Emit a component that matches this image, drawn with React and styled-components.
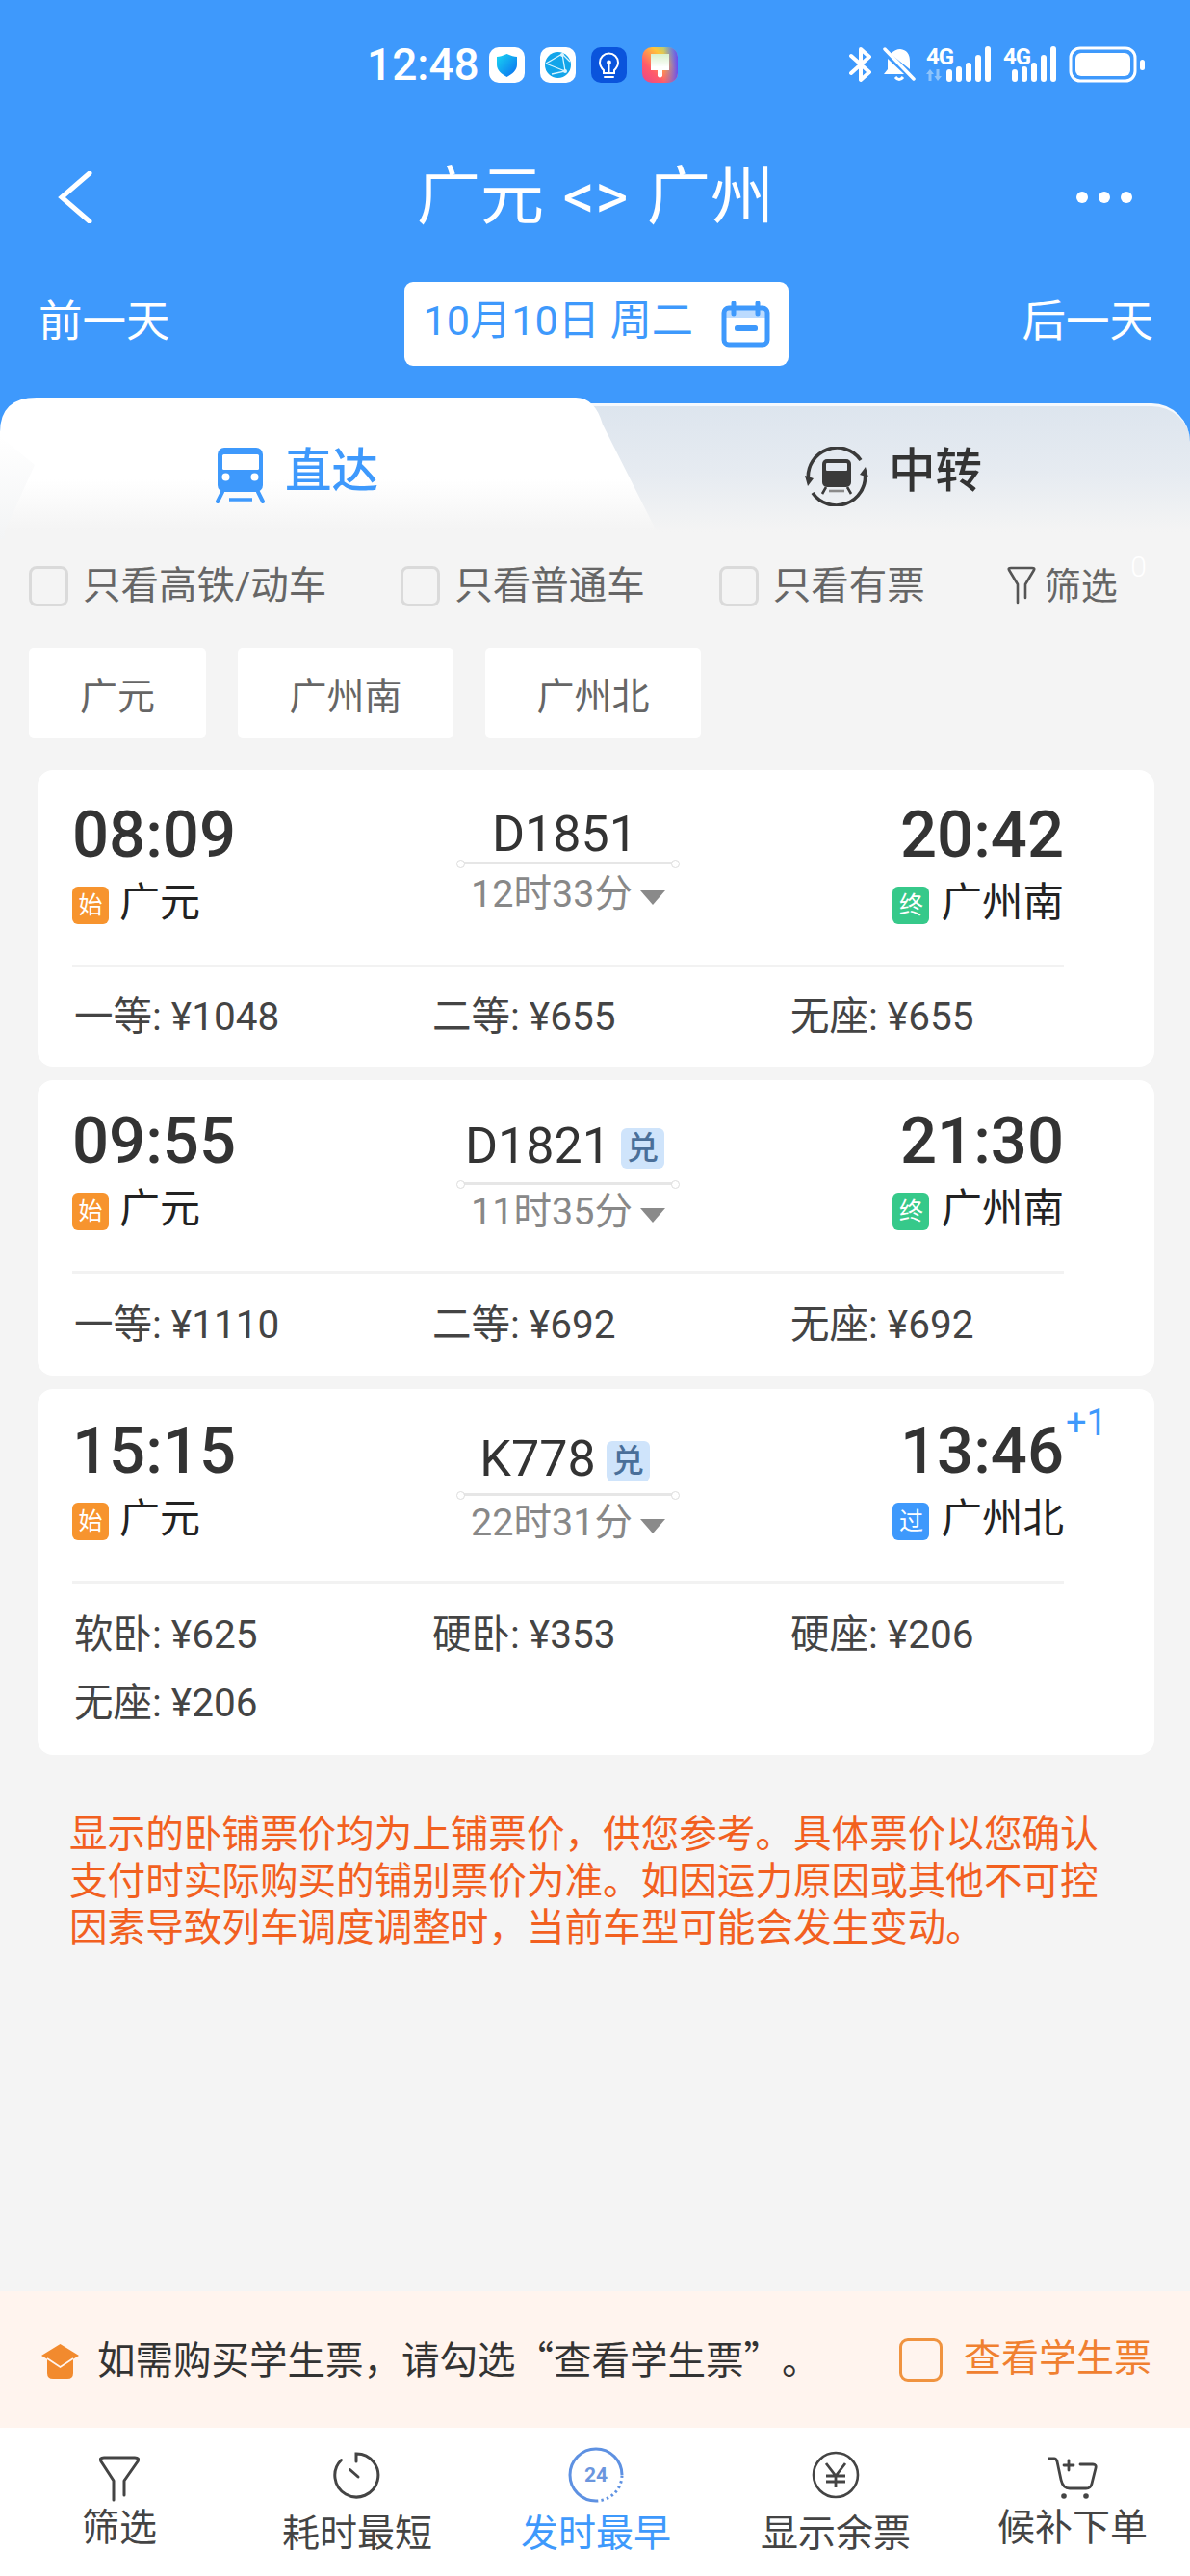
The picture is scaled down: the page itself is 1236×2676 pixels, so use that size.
import React from 'react';
import styled, { createGlobalStyle } from 'styled-components';

const BLUE = '#3e99fc';

const Global = createGlobalStyle`
  html, body { margin: 0; padding: 0; background: #f4f4f4; }
  * { box-sizing: border-box; }
  body { font-family: Roboto, "Noto Sans CJK SC", sans-serif; text-spacing-trim: space-all; }
`;

const Page = styled.div`
  width: 1236px;
  height: 2676px;
  display: flex;
  flex-direction: column;
  background: #f4f4f4;
  overflow: hidden;
`;

const Header = styled.header`
  background: ${BLUE};
  padding: 48px 0 33px;
  color: #fff;
`;

const StatusBar = styled.div`
  height: 38px;
  padding: 0 46px 0 381px;
  display: flex;
  align-items: center;
  justify-content: space-between;
`;

const StatusLeft = styled.div`
  display: flex;
  align-items: center;
`;

const Clock = styled.span`
  font-size: 46px;
  line-height: 38px;
  width: 127px;
  font-weight: 500;
`;

const AppIcons = styled.div`
  display: flex;
  gap: 16px;
  svg { display: block; }
`;

const TitleRow = styled.div`
  margin-top: 87px;
  height: 64px;
  padding: 0 59px 0 60px;
  display: grid;
  grid-template-columns: 60px 1fr 60px;
  align-items: center;
`;

const Title = styled.h1`
  margin: 0;
  text-align: center;
  font-size: 66px;
  line-height: 64px;
  font-weight: 400;
  word-spacing: 3px;
`;

const DateRow = styled.div`
  margin-top: 56px;
  height: 87px;
  padding: 0 38px 0 40px;
  display: flex;
  align-items: center;
  justify-content: space-between;
`;

const DayLink = styled.span`
  font-size: 45.5px;
  line-height: 60px;
  font-weight: 400;
  padding-bottom: 3px;
`;

const DatePill = styled.div`
  width: 399px;
  height: 87px;
  background: #fff;
  border-radius: 9px;
  color: ${BLUE};
  display: flex;
  align-items: center;
  justify-content: space-between;
  padding: 0 19px 0 20px;
`;

const DateText = styled.span`
  font-size: 43.2px;
  line-height: 50px;
  padding-bottom: 6px;
  white-space: nowrap;
`;

const TabBar = styled.div`
  position: relative;
  height: 147px;
  display: grid;
  grid-template-columns: 680px 1fr;
  background: linear-gradient(to bottom, ${BLUE} 60px, #f4f4f4 60px);
  &::before {
    content: '';
    position: absolute;
    inset: 6px 0 0 0;
    border-radius: 40px 40px 0 0;
    border-top: 3px solid #f6f9fd;
    background: linear-gradient(to bottom, #dde5ee 0%, #e6ebf1 50%, #f4f4f4 95%);
  }
  &::after {
    content: '';
    position: absolute;
    left: 0;
    top: 0;
    width: 690px;
    height: 147px;
    clip-path: path('M0 147 V36 Q0 0 38 0 H598 Q618 0 626 28 L686 147 Z');
    background: linear-gradient(to bottom, #fff 0%, #fff 58%, #f4f4f4 94%);
  }
`;

const TabFade = styled.div`
  position: absolute;
  z-index: 1;
  left: 0;
  top: 40px;
  width: 36px;
  height: 107px;
  clip-path: polygon(0 0, 100% 28%, 14% 92%, 14% 100%, 0 100%);
  background: linear-gradient(to bottom, #ffffff 0%, #f3f4f5 100%);
`;

const Tab = styled.div`
  position: relative;
  z-index: 2;
  display: flex;
  align-items: center;
  gap: ${p => p.$gap}px;
  padding-left: ${p => p.$left}px;
  padding-top: 17px;
  color: ${p => p.$color};
  svg { display: block; flex: none; }
`;

const TabLabel = styled.span`
  font-size: 48.5px;
  line-height: 56px;
  font-weight: 500;
  padding-bottom: 10px;
`;

const FilterRow = styled.div`
  position: relative;
  margin-top: 28px;
  padding-left: 30px;
  height: 42px;
  display: flex;
  align-items: center;
  gap: 77px;
`;

const CheckOption = styled.label`
  display: flex;
  align-items: center;
  gap: 15px;
  font-size: 39.5px;
  line-height: 42px;
  color: #666;
  white-space: nowrap;
`;

const CheckBox = styled.span`
  display: block;
  flex: none;
  width: 41px;
  height: 42px;
  border-radius: 8px;
  border: 3px solid #dadada;
  background: #f4f4f4;
`;

const FilterLink = styled.span`
  position: relative;
  display: flex;
  align-items: center;
  gap: 9px;
  font-size: 38px;
  line-height: 42px;
  color: #666;
  margin-left: 8px;
`;

const ZeroBadge = styled.span`
  position: absolute;
  right: -30px;
  top: -14px;
  font-size: 30px;
  line-height: 30px;
  font-weight: 300;
  color: #fff;
`;

const ChipRow = styled.div`
  margin-top: 43px;
  padding-left: 30px;
  display: flex;
  gap: 33px;
`;

const Chip = styled.div`
  height: 94px;
  width: ${p => p.$w}px;
  background: #fff;
  border-radius: 5px;
  font-size: 39px;
  color: #666;
  display: flex;
  align-items: center;
  justify-content: center;
`;

const CardList = styled.div`
  margin-top: 33px;
  padding: 0 37px 0 39px;
  display: flex;
  flex-direction: column;
  gap: 14px;
`;

const Card = styled.article`
  background: #fff;
  border-radius: 16px;
  height: ${p => p.$h}px;
  padding: ${p => p.$top}px 94px 0 36px;
`;

const TopRow = styled.div`
  height: 168px;
  display: grid;
  grid-template-columns: 1fr 240px 1fr;
`;

const Stop = styled.div`
  display: flex;
  flex-direction: column;
  align-items: ${p => (p.$end ? 'flex-end' : 'flex-start')};
`;

const Time = styled.div`
  position: relative;
  font-size: 67px;
  line-height: 66px;
  font-weight: 500;
  color: #333;
`;

const NextDay = styled.span`
  position: absolute;
  left: 100%;
  top: -18px;
  margin-left: 2px;
  font-size: 38px;
  line-height: 44px;
  font-weight: 400;
  color: ${BLUE};
`;

const StationRow = styled.div`
  margin-top: 12px;
  display: flex;
  align-items: center;
  gap: ${p => (p.$wide ? 12 : 11)}px;
  font-size: ${p => (p.$wide ? 42.5 : 42)}px;
  line-height: 52px;
  color: #222;
`;

const EndTag = styled.span`
  display: flex;
  align-items: center;
  justify-content: center;
  width: 38px;
  height: 39px;
  margin-top: 5px;
  border-radius: 6px;
  font-size: 25px;
  color: #fff;
  background: ${p => p.$bg};
`;

const Middle = styled.div`
  display: flex;
  flex-direction: column;
  align-items: center;
`;

const TrainRow = styled.div`
  margin-top: ${p => p.$top}px;
  margin-right: 7px;
  height: 52px;
  display: flex;
  align-items: center;
  gap: 11px;
  font-size: 52px;
  line-height: 52px;
  color: #333;
`;

const CashTag = styled.span`
  display: flex;
  align-items: center;
  justify-content: center;
  width: 45px;
  height: 42px;
  margin-top: 4px;
  border-radius: 6px;
  background: #cfe4fb;
  color: #4a6f99;
  font-size: 33px;
  font-weight: 500;
`;

const RouteLine = styled.div`
  position: relative;
  width: 230px;
  height: 3px;
  margin-top: ${p => p.$top}px;
  background: #e6e6e6;
  &::before, &::after {
    content: '';
    position: absolute;
    top: -2px;
    width: 7px;
    height: 7px;
    border-radius: 50%;
    border: 1.5px solid #ddd;
    background: #fff;
  }
  &::before { left: -1px; }
  &::after { right: -1px; }
`;

const Duration = styled.div`
  margin-top: ${p => p.$top}px;
  display: flex;
  align-items: center;
  gap: 8px;
  font-size: 39.5px;
  line-height: 52px;
  color: #888;
`;

const Caret = styled.span`
  width: 0;
  height: 0;
  margin-top: 7px;
  border-left: 13px solid transparent;
  border-right: 13px solid transparent;
  border-top: 15px solid #8a8a8a;
`;

const Divider = styled.div`
  height: 3px;
  background: #f2f2f2;
`;

const Prices = styled.div`
  margin-top: ${p => p.$top}px;
  padding-left: 2px;
  display: grid;
  grid-template-columns: repeat(3, 372px);
  grid-auto-rows: 71px;
`;

const Price = styled.div`
  font-size: 40.5px;
  line-height: 71px;
  color: #444;
  white-space: nowrap;
`;

const Notice = styled.p`
  margin: 55px 0 0;
  padding: 0 0 0 72px;
  width: 1160px;
  font-family: "Noto Sans CJK SC", sans-serif;
  font-size: 39.6px;
  line-height: 48.5px;
  color: #f2601f;
`;

const Spacer = styled.div`
  flex: 1;
`;

const StudentBar = styled.div`
  height: 142px;
  padding: 0 40px 0 43px;
  background: #fff4ee;
  display: flex;
  align-items: center;
  justify-content: space-between;
`;

const StudentHint = styled.div`
  display: flex;
  align-items: center;
  gap: 19px;
  font-family: "Noto Sans CJK SC", sans-serif;
  font-size: 39.5px;
  line-height: 50px;
  color: #333;
  white-space: nowrap;
  svg { display: block; flex: none; margin-top: 3px; }
`;

const HintText = styled.span`
  padding-bottom: 4px;
`;

const StudentCheck = styled.div`
  display: flex;
  align-items: center;
  gap: 22px;
  font-size: 39px;
  line-height: 50px;
  color: #f08030;
`;

const OrangeLabel = styled.span`
  padding-bottom: 3px;
`;

const OrangeBox = styled.span`
  display: block;
  width: 45px;
  height: 45px;
  border: 3px solid #f0933f;
  border-radius: 9px;
`;

const BottomNav = styled.nav`
  height: 154px;
  background: #fff;
  display: grid;
  grid-template-columns: 248px 246px 250px 248px 244px;
`;

const NavItem = styled.div`
  display: flex;
  flex-direction: column;
  align-items: center;
  color: ${p => (p.$active ? BLUE : '#444')};
  svg { display: block; }
`;

const NavIconSlot = styled.div`
  height: 58px;
  margin-top: ${p => p.$top}px;
  display: flex;
  align-items: center;
`;

const NavLabel = styled.span`
  margin-top: ${p => p.$gap}px;
  font-size: 39px;
  line-height: 50px;
  white-space: nowrap;
`;

const BackIcon = () => (
  <svg width="36" height="54" viewBox="0 0 36 54" fill="none">
    <path d="M33 2 L4 27 L33 52" stroke="#fff" strokeWidth="5" strokeLinecap="round" strokeLinejoin="miter" />
  </svg>
);

const MoreIcon = () => (
  <svg width="60" height="14" viewBox="0 0 60 14" fill="#fff">
    <circle cx="7" cy="7" r="6" />
    <circle cx="30" cy="7" r="6" />
    <circle cx="53" cy="7" r="6" />
  </svg>
);

const CalendarIcon = () => (
  <svg width="51" height="48" viewBox="0 0 51 48" fill="none">
    <rect x="3" y="7" width="45" height="38" rx="5" stroke={BLUE} strokeWidth="5" />
    <rect x="3" y="7" width="45" height="10" fill={BLUE} opacity=".35" />
    <path d="M13 2 V13 M38 2 V13" stroke={BLUE} strokeWidth="5" strokeLinecap="round" />
    <rect x="14" y="25" width="24" height="6" rx="2.5" fill={BLUE} />
  </svg>
);

const ShieldApp = () => (
  <svg width="37" height="37" viewBox="0 0 37 37">
    <defs>
      <linearGradient id="sh" x1="0" y1="0" x2="1" y2="1">
        <stop offset="0" stopColor="#19d6f2" />
        <stop offset="1" stopColor="#0b6cf0" />
      </linearGradient>
    </defs>
    <rect width="37" height="37" rx="10" fill="#fff" />
    <path d="M18.5 7 C23 9 26 10 29 10 V18 C29 24 24 28 18.5 31 C13 28 8 24 8 18 V10 C11 10 14 9 18.5 7 Z" fill="url(#sh)" />
  </svg>
);

const GlobeApp = () => (
  <svg width="37" height="37" viewBox="0 0 37 37">
    <rect width="37" height="37" rx="10" fill="#fff" />
    <circle cx="18.5" cy="18.5" r="13.5" fill="#12a5ea" />
    <path d="M6 17 L23 7 L26 25 L12 28 M6 17 L26 25 M23 7 L31 15" stroke="#d8f4ff" strokeWidth="1.3" fill="none" />
    <circle cx="23" cy="8" r="2" fill="#d8f4ff" />
    <circle cx="26" cy="25" r="2" fill="#d8f4ff" />
  </svg>
);

const BulbApp = () => (
  <svg width="37" height="37" viewBox="0 0 37 37">
    <rect width="37" height="37" rx="10" fill="#0a54dc" />
    <path d="M13 24 C10 21 9 19 9 16 A9.5 9.5 0 0 1 28 16 C28 19 27 21 24 24 V27 H13 Z M14 31 H23" fill="none" stroke="#fff" strokeWidth="2" strokeLinecap="round" />
    <circle cx="18.5" cy="16" r="2.4" fill="#fff" />
    <path d="M18.5 17 V26" stroke="#fff" strokeWidth="2" />
  </svg>
);

const BrushApp = () => (
  <svg width="37" height="37" viewBox="0 0 37 37">
    <defs>
      <linearGradient id="br" x1="1" y1="0" x2="0" y2="1">
        <stop offset="0" stopColor="#58d6c8" />
        <stop offset=".35" stopColor="#ffc43a" />
        <stop offset=".7" stopColor="#ff5a6a" />
        <stop offset="1" stopColor="#e8468c" />
      </linearGradient>
      <linearGradient id="bh" x1="0" y1="0" x2="0" y2="1">
        <stop offset="0" stopColor="#d9f0cc" />
        <stop offset="1" stopColor="#fff" />
      </linearGradient>
      <linearGradient id="bv" x1="0" y1="0" x2="1" y2="0">
        <stop offset=".6" stopColor="#6a4df0" stopOpacity="0" />
        <stop offset="1" stopColor="#6a4df0" />
      </linearGradient>
    </defs>
    <rect width="37" height="37" rx="10" fill="url(#br)" />
    <rect width="37" height="37" rx="10" fill="url(#bv)" />
    <rect x="9" y="7" width="19" height="14" fill="url(#bh)" />
    <path d="M9 20 H28 V24 H21 V30 Q18.5 33 16 30 V24 H9 Z" fill="#fff" />
  </svg>
);

const SignalBars = () => (
  <svg width="47" height="37" viewBox="0 0 47 37" fill="#fff">
    <rect x="0" y="24" width="6" height="13" rx="3" />
    <rect x="10" y="21" width="6" height="16" rx="3" />
    <rect x="20" y="17" width="6" height="20" rx="3" />
    <rect x="30" y="9" width="6" height="28" rx="3" />
    <rect x="40" y="0" width="6" height="37" rx="3" />
  </svg>
);

const StatusRight = styled.div`
  display: flex;
  align-items: flex-start;
  height: 38px;
  svg { display: block; flex: none; }
`;

const NetLabel = styled.span`
  display: block;
  flex: none;
  width: 30px;
  font-size: 24px;
  line-height: 20px;
  font-weight: 700;
  margin-top: 1px;
  letter-spacing: -1px;
  color: #fff;
`;

const NetBlock = styled.div`
  position: relative;
  display: flex;
  width: ${p => p.$w}px;
  margin-left: ${p => p.$left}px;
  & > svg { position: absolute; right: 0; top: 0; }
`;

const BluetoothMuted = () => (
  <svg width="24" height="38" viewBox="0 0 24 38" fill="none">
    <path d="M2 10 L21 27 L12 35 V3 L21 11 L2 28" stroke="#fff" strokeWidth="4" strokeLinejoin="round" strokeLinecap="round" />
  </svg>
);

const BellMuted = () => (
  <svg width="34" height="38" viewBox="0 0 34 38" fill="none" style={{ marginLeft: 11 }}>
    <path d="M8 8 Q13 3 18 3 Q28 4 28 16 V24 L8 8 Z M5 13 V24 L1 29 H22 Z" fill="#fff" />
    <path d="M13 32 Q17 37 21 32" stroke="#fff" strokeWidth="3" />
    <path d="M2 3 L32 34" stroke="#fff" strokeWidth="3.5" strokeLinecap="round" />
  </svg>
);

const DataArrows = () => (
  <svg width="16" height="12" viewBox="0 0 16 12" style={{ position: 'absolute', left: 0, top: 24, right: 'auto' }} fill="#8ec4fb">
    <path d="M4 0 L8 5 H5.5 V12 H2.5 V5 H0 Z M12 12 L8.5 7 H10.5 V0 H13.5 V7 H16 Z" />
  </svg>
);

const Battery = () => (
  <svg width="80" height="38" viewBox="0 0 80 38" style={{ marginLeft: 12 }}>
    <rect x="2" y="2" width="67" height="34" rx="10" fill="none" stroke="#fff" strokeWidth="3" />
    <rect x="7" y="7" width="57" height="24" rx="6" fill="#fff" />
    <rect x="74" y="14" width="5" height="11" rx="2.5" fill="#fff" />
  </svg>
);

const TrainIcon = () => (
  <svg width="51" height="60" viewBox="0 0 51 60" fill="none">
    <rect x="2" y="0" width="47" height="46" rx="7" fill={BLUE} />
    <rect x="7" y="7" width="38" height="16" rx="1.5" fill="#fff" />
    <circle cx="10.5" cy="30.5" r="4" fill="#fff" />
    <circle cx="40.5" cy="30.5" r="4" fill="#fff" />
    <path d="M7 46 L2 56 M44 46 L49 56" stroke={BLUE} strokeWidth="4" strokeLinecap="round" />
    <path d="M14 54 H38" stroke={BLUE} strokeWidth="3.5" />
  </svg>
);

const TransferIcon = () => (
  <svg width="66" height="62" viewBox="0 0 66 62" fill="none">
    <path d="M3.5 34 A30 30 0 0 1 58 14" stroke="#3a3a3a" strokeWidth="3.6" />
    <path d="M62.5 28 A30 30 0 0 1 8 48" stroke="#3a3a3a" strokeWidth="3.6" />
    <path d="M0 30 L9 33 L3 41 Z M66 32 L57 29 L63 21 Z" fill="#3a3a3a" />
    <rect x="18" y="13" width="30" height="29" rx="5" fill="#3a3a3a" />
    <rect x="22" y="17" width="22" height="8" rx="1" fill="#e4e9f0" />
    <path d="M22 42 L18 49 M44 42 L48 49" stroke="#3a3a3a" strokeWidth="2.6" />
    <path d="M25 46 H41" stroke="#8a8a8a" strokeWidth="2.6" />
  </svg>
);

const SmallFunnel = () => (
  <svg width="30" height="42" viewBox="0 0 30 42" fill="none">
    <path d="M11 38 V19 L2 4 Q1 2 4 2 H26 Q29 2 28 4 L19 19 V33" stroke="#555" strokeWidth="2.6" strokeLinejoin="round" strokeLinecap="round" />
  </svg>
);

const NavFunnel = () => (
  <svg width="42" height="48" viewBox="0 0 42 48" fill="none">
    <path d="M15 46 V26 L2 6 Q0 2 5 2 H37 Q42 2 40 6 L26 26 V41" stroke="#444" strokeWidth="3" strokeLinecap="round" strokeLinejoin="round" />
  </svg>
);

const NavClock = () => (
  <svg width="50" height="50" viewBox="0 0 50 50" fill="none">
    <path d="M24 11 V3 A22.5 22.5 0 1 1 8.5 9.5" stroke="#444" strokeWidth="3" strokeLinecap="round" />
    <path d="M17.5 19.5 L26 27" stroke="#444" strokeWidth="3" strokeLinecap="round" />
  </svg>
);

const NavEarliest = () => (
  <svg width="58" height="58" viewBox="0 0 58 58" fill="none">
    <path d="M56 29 A27 27 0 1 0 29 56" stroke="#5e91e2" strokeWidth="3" />
    <path d="M29 56 A27 27 0 0 0 56 29" stroke="#5e91e2" strokeWidth="3" strokeDasharray="2.4 3.2" />
    <text x="29" y="36" textAnchor="middle" fontSize="21" fontWeight="700" fill="#6b96de" fontFamily="Roboto, sans-serif">24</text>
  </svg>
);

const NavYen = () => (
  <svg width="50" height="50" viewBox="0 0 50 50" fill="none" stroke="#444">
    <circle cx="25" cy="25" r="23" strokeWidth="2.6" />
    <path d="M15 13 L25 26 L35 13 M25 26 V38 M15 26 H35 M15 32 H35" strokeWidth="2.8" />
  </svg>
);

const NavCart = () => (
  <svg width="52" height="46" viewBox="0 0 52 46" fill="none" stroke="#444" strokeWidth="2.8" strokeLinecap="round">
    <path d="M1 2 H7 Q9 2 10 5 L14 24 Q16 33 23 33 H40 Q45 33 46 28 L50 12 Q51 8 47 8 H34" />
    <path d="M22 4 V14 M17 9 H27" />
    <circle cx="17" cy="41" r="2.8" fill="#444" stroke="none" />
    <circle cx="40" cy="41" r="2.8" fill="#444" stroke="none" />
  </svg>
);

const CapIcon = () => (
  <svg width="39" height="36" viewBox="0 0 39 36">
    <path d="M19.5 0 L39 12 L19.5 24 L0 12 Z" fill="#f28a2e" />
    <path d="M6 12 H33 V30 Q33 36 27 36 H12 Q6 36 6 30 Z" fill="#f28a2e" />
    <path d="M6 15 L19.5 24 L33 15" stroke="#fff4ee" strokeWidth="1.8" fill="none" />
  </svg>
);

const TAGS = {
  始: '#f7942e',
  终: '#36c98a',
  过: '#3e99fc',
};

const trains = [
  {
    id: 'D1851', from: '08:09', to: '20:42', station: '广州南', tag: '终', duration: '12时33分',
    h: 308, top: 34, trainTop: 7, lineTop: 2, durTop: 5, priceTop: 16,
    prices: ['一等: ¥1048', '二等: ¥655', '无座: ¥655'],
  },
  {
    id: 'D1821', from: '09:55', to: '21:30', station: '广州南', tag: '终', duration: '11时35分', cash: true,
    h: 307, top: 30, trainTop: 13, lineTop: 11, durTop: 2, priceTop: 18,
    prices: ['一等: ¥1110', '二等: ¥692', '无座: ¥692'],
  },
  {
    id: 'K778', from: '15:15', to: '13:46', station: '广州北', tag: '过', duration: '22时31分', cash: true, next: '+1',
    h: 380, top: 31, trainTop: 16, lineTop: 9, durTop: 2, priceTop: 18,
    prices: ['软卧: ¥625', '硬卧: ¥353', '硬座: ¥206', '无座: ¥206'],
  },
];

const TrainCard = ({ t }) => (
  <Card $h={t.h} $top={t.top}>
    <TopRow>
      <Stop>
        <Time>{t.from}</Time>
        <StationRow>
          <EndTag $bg={TAGS['始']}>始</EndTag>
          广元
        </StationRow>
      </Stop>
      <Middle>
        <TrainRow $top={t.trainTop}>
          {t.id}
          {t.cash && <CashTag>兑</CashTag>}
        </TrainRow>
        <RouteLine $top={t.lineTop} />
        <Duration $top={t.durTop}>
          {t.duration}
          <Caret />
        </Duration>
      </Middle>
      <Stop $end>
        <Time>
          {t.to}
          {t.next && <NextDay>{t.next}</NextDay>}
        </Time>
        <StationRow $wide>
          <EndTag $bg={TAGS[t.tag]}>{t.tag}</EndTag>
          {t.station}
        </StationRow>
      </Stop>
    </TopRow>
    <Divider />
    <Prices $top={t.priceTop}>
      {t.prices.map(p => <Price key={p}>{p}</Price>)}
    </Prices>
  </Card>
);

export default function App() {
  return (
    <Page>
      <Global />
      <Header>
        <StatusBar>
          <StatusLeft>
            <Clock>12:48</Clock>
            <AppIcons>
              <ShieldApp />
              <GlobeApp />
              <BulbApp />
              <BrushApp />
            </AppIcons>
          </StatusLeft>
          <StatusRight>
            <BluetoothMuted />
            <BellMuted />
            <NetBlock $w={68} $left={11}>
              <NetLabel>4G</NetLabel>
              <DataArrows />
              <SignalBars />
            </NetBlock>
            <NetBlock $w={56} $left={12}>
              <NetLabel>4G</NetLabel>
              <SignalBars />
            </NetBlock>
            <Battery />
          </StatusRight>
        </StatusBar>
        <TitleRow>
          <BackIcon />
          <Title>广元 &lt;&gt; 广州</Title>
          <MoreIcon />
        </TitleRow>
        <DateRow>
          <DayLink>前一天</DayLink>
          <DatePill>
            <DateText>10月10日 周二</DateText>
            <CalendarIcon />
          </DatePill>
          <DayLink>后一天</DayLink>
        </DateRow>
      </Header>

      <TabBar>
        <TabFade />
        <Tab $left={224} $gap={21} $color={BLUE}>
          <TrainIcon />
          <TabLabel>直达</TabLabel>
        </Tab>
        <Tab $left={156} $gap={21} $color="#333">
          <TransferIcon />
          <TabLabel>中转</TabLabel>
        </Tab>
      </TabBar>

      <FilterRow>
        <CheckOption><CheckBox />只看高铁/动车</CheckOption>
        <CheckOption><CheckBox />只看普通车</CheckOption>
        <CheckOption><CheckBox />只看有票</CheckOption>
        <FilterLink>
          <SmallFunnel />
          筛选
          <ZeroBadge>0</ZeroBadge>
        </FilterLink>
      </FilterRow>

      <ChipRow>
        <Chip $w={184}>广元</Chip>
        <Chip $w={224}>广州南</Chip>
        <Chip $w={224}>广州北</Chip>
      </ChipRow>

      <CardList>
        {trains.map(t => <TrainCard key={t.id} t={t} />)}
      </CardList>

      <Notice>
        显示的卧铺票价均为上铺票价，供您参考。具体票价以您确认支付时实际购买的铺别票价为准。如因运力原因或其他不可控因素导致列车调度调整时，当前车型可能会发生变动。
      </Notice>

      <Spacer />

      <StudentBar>
        <StudentHint>
          <CapIcon />
          <HintText>如需购买学生票，请勾选“查看学生票”。</HintText>
        </StudentHint>
        <StudentCheck>
          <OrangeBox />
          <OrangeLabel>查看学生票</OrangeLabel>
        </StudentCheck>
      </StudentBar>

      <BottomNav>
        <NavItem>
          <NavIconSlot $top={24}><NavFunnel /></NavIconSlot>
          <NavLabel $gap={-3}>筛选</NavLabel>
        </NavItem>
        <NavItem>
          <NavIconSlot $top={20}><NavClock /></NavIconSlot>
          <NavLabel $gap={7}>耗时最短</NavLabel>
        </NavItem>
        <NavItem $active>
          <NavIconSlot $top={20}><NavEarliest /></NavIconSlot>
          <NavLabel $gap={7}>发时最早</NavLabel>
        </NavItem>
        <NavItem>
          <NavIconSlot $top={20}><NavYen /></NavIconSlot>
          <NavLabel $gap={7}>显示余票</NavLabel>
        </NavItem>
        <NavItem>
          <NavIconSlot $top={24}><NavCart /></NavIconSlot>
          <NavLabel $gap={-3}>候补下单</NavLabel>
        </NavItem>
      </BottomNav>
    </Page>
  );
}
